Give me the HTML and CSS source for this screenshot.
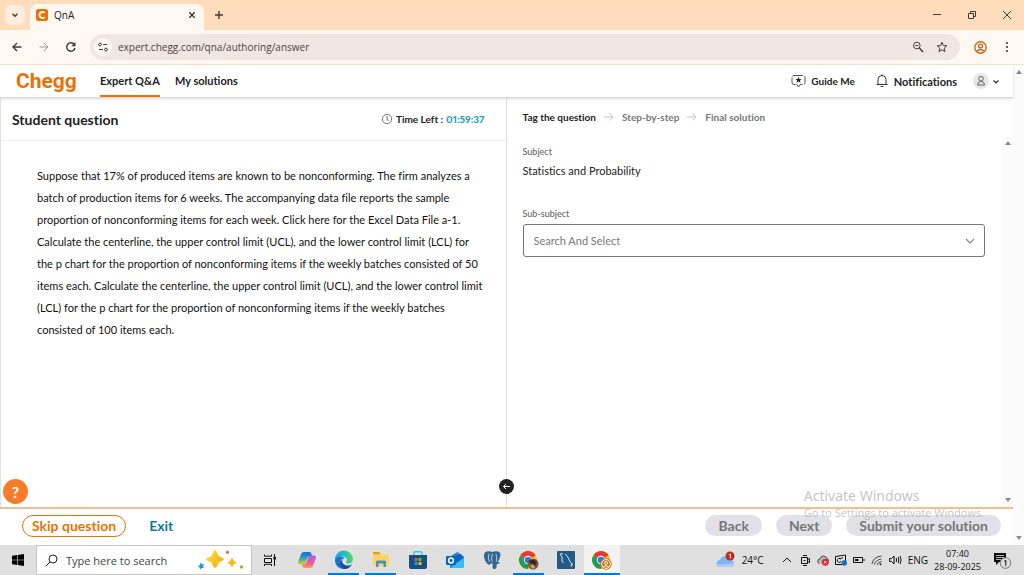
FILE: index.html
```html
<!DOCTYPE html>
<html lang="en">
<head>
<meta charset="utf-8">
<meta name="viewport" content="width=device-width, initial-scale=1">
<title>QnA</title>
<link rel="stylesheet" href="styles.css">
</head>
<body>
<div class="tabstrip">
  <button class="tab-search" aria-label="Search tabs"><svg width="10" height="10" viewBox="0 0 10 10"><path class="ln bold" d="M2.5 3.7 5 6.2l2.500-2.500"/></svg></button>
  <div class="tab">
    <svg width="12" height="12" viewBox="0 0 12 12"><rect width="12" height="12" rx="2.500" fill="#eb7100"/><path d="M8.600 3.900A3 3 0 1 0 8.600 8.100" fill="none" stroke="#fff" stroke-width="1.800"/></svg>
    <span class="tab-title">QnA</span>
    <button class="bare" aria-label="Close tab"><svg width="10" height="10" viewBox="0 0 10 10"><path class="ln bold" d="M2.300 2.300l5.400 5.400M7.700 2.300 2.300 7.700"/></svg></button>
  </div>
  <button class="bare new-tab" aria-label="New tab"><svg width="10" height="10" viewBox="0 0 10 10"><path class="ln bold" d="M5 1v8M1 5h8"/></svg></button>
  <div class="window-controls">
    <button class="bare" aria-label="Minimize"><svg width="10" height="10" viewBox="0 0 10 10"><path class="ln" d="M1 4.500h8"/></svg></button>
    <button class="bare" aria-label="Restore"><svg width="10" height="10" viewBox="0 0 10 10"><path class="ln" d="M1.500 3.500h5v5h-5zM3.500 3.500v-2h5v5h-2"/></svg></button>
    <button class="bare" aria-label="Close"><svg width="10" height="10" viewBox="0 0 10 10"><path class="ln" d="M1 1l8 8M9 1 1 9"/></svg></button>
  </div>
</div>
<div class="toolbar">
  <button class="bare" aria-label="Back"><svg width="12" height="12" viewBox="0 0 12 12"><path class="ln bold" d="M10.500 6H2M6 2 2 6l4 4"/></svg></button>
  <button class="bare dim" aria-label="Forward"><svg width="12" height="12" viewBox="0 0 12 12"><path class="ln" d="M1.500 6H10M6 2l4 4-4 4"/></svg></button>
  <button class="bare" aria-label="Reload"><svg width="12" height="12" viewBox="0 0 12 12"><path class="ln bold" d="M10 7A4.200 4.200 0 1 1 9.300 3.500"/><path d="M10.500 1v4.200H6.300z" fill="#46392f"/></svg></button>
  <div class="omnibox">
    <button class="site-info" aria-label="Site information"><svg width="12" height="12" viewBox="0 0 12 12"><circle class="ln" cx="3" cy="3.500" r="1.400"/><path class="ln" d="M6 3.500h4M2 8.500h4"/><circle class="ln" cx="9" cy="8.500" r="1.400"/></svg></button>
    <input class="url" aria-label="Address" value="expert.chegg.com/qna/authoring/answer">
    <button class="bare" aria-label="Zoom"><svg width="12" height="12" viewBox="0 0 12 12"><circle class="ln" cx="4.800" cy="4.500" r="3.300"/><path class="ln bold" d="M7.300 7l3.700 4"/><path class="ln" d="M3.300 4.500h3"/></svg></button>
    <button class="bare" aria-label="Bookmark"><svg width="12" height="12" viewBox="0 0 12 12"><path class="ln" d="M6 1.300 7.300 4.500l3.500.3-2.600 2.300.8 3.500-3-1.900-3 1.900.8-3.500L1.200 4.800l3.500-.3z"/></svg></button>
  </div>
  <button class="bare profile" aria-label="Profile"><svg width="13" height="13" viewBox="0 0 13 13"><g fill="none" stroke="#c9691b" stroke-width="1.400"><circle cx="6.500" cy="6.500" r="5.700"/><circle cx="6.500" cy="5" r="1.900"/><path d="M2.600 10.300Q6.500 6.800 10.400 10.300"/></g></svg></button>
  <button class="bare" aria-label="Menu"><svg width="12" height="12" viewBox="0 0 12 12" fill="#46392f"><circle cx="6" cy="2" r="1.100"/><circle cx="6" cy="6" r="1.100"/><circle cx="6" cy="10" r="1.100"/></svg></button>
</div>

<div class="viewport">
  <div class="page">
    <header class="site-header">
      <a class="logo" href="#">Chegg</a>
      <nav class="site-nav">
        <a class="current" href="#">Expert Q&amp;A</a>
        <a href="#">My solutions</a>
      </nav>
      <button class="bare guide"><svg width="15" height="15" viewBox="0 0 15 15"><path d="M3 1.500h9q2 0 2 2v5q0 2-2 2H9L7.500 13 6 10.500H3q-2 0-2-2v-5q0-2 2-2z" fill="none" stroke="#555263" stroke-dasharray="9 1"/><path d="M7.500 3l.9 2 2.200.2-1.700 1.400.6 2.200-2-1.200-2 1.200.6-2.200-1.700-1.400 2.200-.2z" fill="#222135"/></svg>Guide Me</button>
      <button class="bare notify"><svg width="12" height="14" viewBox="0 0 12 14"><path d="M.5 10.500h11M2 10.300V5.500a4 4 0 0 1 8 0v4.800M6 1.500V.300M4.600 12.500h2.800" fill="none" stroke="#333"/></svg>Notifications</button>
      <button class="bare account" aria-label="Account"><span class="avatar"><svg width="10" height="12" viewBox="0 0 10 12"><circle cx="5" cy="3.700" r="2.300" fill="none" stroke="#666"/><path d="M1.500 10q0-3.500 3.500-3.500T8.500 10z" fill="none" stroke="#666"/></svg></span><svg width="8" height="8" viewBox="0 0 8 8"><path class="ln bold" d="M1.500 3.500 4 5.800 6.500 3.500"/></svg></button>
    </header>
    <main class="columns">
      <section class="question">
        <div class="question-head">
          <h1>Student question</h1>
          <p class="timer"><svg width="12" height="12" viewBox="0 0 12 12"><circle cx="6" cy="6" r="4.700" fill="none" stroke="#777"/><path d="M6 3V6.500l1.800 1" fill="none" stroke="#666"/></svg>Time Left : <b>01:59:37</b></p>
        </div>
        <p class="question-text">Suppose that 17% of produced items are known to be nonconforming. The firm analyzes a<br>batch of production items for 6 weeks. The accompanying data file reports the sample<br>proportion of nonconforming items for each week. Click here for the Excel Data File a-1.<br>Calculate the centerline, the upper control limit (UCL), and the lower control limit (LCL) for<br>the p chart for the proportion of nonconforming items if the weekly batches consisted of 50<br>items each. Calculate the centerline, the upper control limit (UCL), and the lower control limit<br>(LCL) for the p chart for the proportion of nonconforming items if the weekly batches<br>consisted of 100 items each.</p>
        <button class="help" aria-label="Help">?</button>
        <button class="collapse" aria-label="Collapse panel"><svg width="9" height="9" viewBox="0 0 9 9"><path d="M8 4.500H1.500M4 2 1.500 4.500 4 7" fill="none" stroke="#fff"/></svg></button>
      </section>
      <section class="answer">
        <ol class="steps">
          <li class="active">Tag the question</li>
          <li><svg width="10" height="10" viewBox="0 0 10 10"><path d="M0 5h9M5.500 1.500 9 5 5.500 8.500" fill="none" stroke="#c4c4cc"/></svg>Step-by-step</li>
          <li><svg width="10" height="10" viewBox="0 0 10 10"><path d="M0 5h9M5.500 1.500 9 5 5.500 8.500" fill="none" stroke="#c4c4cc"/></svg>Final solution</li>
        </ol>
        <div class="answer-body">
          <div class="fields">
            <h2 class="label">Subject</h2>
            <p class="subject">Statistics and Probability</p>
            <label class="label" for="sub">Sub-subject</label>
            <div class="select-box">
              <select id="sub"><option>Search And Select</option></select>
              <svg width="10" height="10" viewBox="0 0 10 10"><path d="M1 3l4 4 4-4" fill="none" stroke="#85838f" stroke-width="1.100"/></svg>
            </div>
          </div>
          <div class="scrollbar"><i class="up"></i><i class="down"></i></div>
        </div>
      </section>
    </main>
    <footer class="actions">
      <button class="skip">Skip question</button>
      <a class="exit" href="#">Exit</a>
      <div class="action-group">
        <button class="pill">Back</button>
        <button class="pill">Next</button>
        <button class="pill">Submit your solution</button>
      </div>
    </footer>
    <div class="watermark"><strong>Activate Windows</strong><span>Go to Settings to activate Windows.</span></div>
  </div>
  <div class="scrollbar"><i class="up"></i><i class="down"></i></div>
</div>

<div class="taskbar">
  <button class="task start" aria-label="Start"><svg width="12" height="12" viewBox="0 0 12 12" fill="#000"><path d="M0 1.700 5.200 1v4.700H0zM5.800.9 12 0v5.700H5.800zM0 6.300h5.200V11L0 10.300zM5.800 6.300H12V12l-6.200-.9z"/></svg></button>
  <div class="search">
    <svg width="13" height="13" viewBox="0 0 13 13"><circle cx="8" cy="5" r="4" fill="none" stroke="#222"/><path d="M5 8 .8 12.200" stroke="#222"/></svg>
    <input aria-label="Search" placeholder="Type here to search">
    <svg width="48" height="20" viewBox="0 0 48 20"><defs><linearGradient id="gold" x1="0" y1="0" x2="1" y2="1"><stop offset="0" stop-color="#ffe14a"/><stop offset="1" stop-color="#f2a900"/></linearGradient></defs><path d="M18 0q1.500 0 2.300 3.300Q21 6.500 24 7.200q3 .8 3 2t-3 2q-3 .8-3.700 4Q19.500 18 18 18t-2.300-2.800q-.7-3.200-3.700-4-3-.8-3-2t3-2q3-.7 3.700-3.900Q16.500 0 18 0z" fill="url(#gold)"/><path d="M35 8q.8 0 1.400 2.300.3.900 1.600 1.300 1.500.5 1.500 1T38 13.700q-1.300.4-1.600 1.400-.6 2-1.400 2t-1.400-2q-.3-1-1.600-1.400-1.500-.5-1.500-1.100t1.500-1q1.300-.4 1.600-1.300Q34.200 8 35 8z" fill="#f8b918"/><circle cx="30.500" cy="2.300" r="1.500" fill="#f05b25"/><rect x="43" y="15.500" width="3" height="3" rx=".8" fill="#80bd27"/><path d="M3.500 12.500l1.300 1.800 2.100-.2-.8 2 .7 2-2.100-.2-1.700 1.500-.5-2.100-1.800-.8 1.800-1.100z" fill="#119ce8"/></svg>
  </div>
  <button class="task view" aria-label="Task view"><svg width="12" height="12" viewBox="0 0 12 12"><path d="M.5.500v1.700h7V.500M.5 4.500h7v4h-7zM.5 12v-1.700h7V12M10.500 0v12" fill="none" stroke="#111"/><rect x="9.500" y="3" width="2.500" height="2.500" fill="#111"/></svg></button>
  <button class="task" aria-label="Copilot"><svg width="20" height="20" viewBox="0 0 20 20"><defs><linearGradient id="ca" x1="0" y1="0" x2="0" y2="1"><stop offset="0" stop-color="#1769d2"/><stop offset=".5" stop-color="#28a8b8"/><stop offset="1" stop-color="#eed21d"/></linearGradient><linearGradient id="cb" x1="0" y1="0" x2="0" y2="1"><stop offset="0" stop-color="#a75cf0"/><stop offset=".6" stop-color="#ef5c93"/><stop offset="1" stop-color="#ff9b52"/></linearGradient></defs><path d="M4.300 3.500Q5 2 7 2h5.500q1.500 0 2 2l.7 2h-2q-2 0-2.500 1.500L9 12q-.7 2.500-2.500 2.500H3q-2.500 0-1.800-3z" fill="url(#ca)"/><path d="M15.700 16.500Q15 18 13 18H7.500q-1.500 0-2-2l-.5-1.500h2q2 0 2.500-2L11 8q.7-2.500 2.500-2.500H17q2.500 0 1.800 3z" fill="url(#cb)"/></svg></button>
  <button class="task open" aria-label="Edge"><svg width="20" height="20" viewBox="0 0 20 20"><defs><linearGradient id="ea" x1="0" y1=".4" x2="1" y2=".3"><stop offset="0" stop-color="#189cdc"/><stop offset=".55" stop-color="#27bfc2"/><stop offset="1" stop-color="#69d94b"/></linearGradient></defs><path d="M1 10a9 9 0 0 1 18-1c0 3-2 4.500-4.500 4.500-2 0-3-1-2-2.300C14 8.500 11 6.500 8 6.500 4.500 6.500 2 8 1 10z" fill="url(#ea)"/><path d="M1 10c.8-2.500 3.500-3.800 6-3.500 2 .2 3 1 3.500 2C8 8.500 6.500 10 6.500 12c0 3 3 5.500 6 5.500l-1.800 1.400C5.500 19.500.8 15.500 1 10z" fill="#1377ca"/><path d="M8.500 9.200c-1.500 4 2 6.500 5.500 6.300 1.500 0 3-.6 4-1.300-1.500 3-4.500 5-7.500 4.800C6 17.500 4 12 8.500 9.200z" fill="#124e9b"/></svg></button>
  <button class="task open" aria-label="File Explorer"><svg width="20" height="20" viewBox="0 0 20 20"><path d="M2 3q0-1 1-1h5l2 2.500H2z" fill="#e39b10"/><path d="M2 4.500h15q1 0 1 1V15q0 1-1 1H3q-1 0-1-1z" fill="#ffd45c"/><path d="M5 17v-5q0-1.500 1.500-1.500h7q1.500 0 1.500 1.500v5h-2.500v-3.500h-5V17z" fill="#3f91d2"/></svg></button>
  <button class="task" aria-label="Microsoft Store"><svg width="20" height="20" viewBox="0 0 20 20"><path d="M6 6V3q0-1.200 1.200-1.200h5.600Q14 1.800 14 3v3" fill="none" stroke="#43c3ee" stroke-width="1.500"/><path d="M1 5h18v12q0 2-2 2H3q-2 0-2-2z" fill="#164f86"/><path d="M6.500 8h3v3h-3z" fill="#f35325"/><path d="M10.500 8h3v3h-3z" fill="#81bc06"/><path d="M6.500 12h3v3h-3z" fill="#05a6f0"/><path d="M10.500 12h3v3h-3z" fill="#ffba08"/></svg></button>
  <button class="task" aria-label="Outlook"><svg width="20" height="20" viewBox="0 0 20 20"><path d="M5 6.500 12.500 2 19 7v9q0 2-2 2H5z" fill="#1684db"/><path d="M6 7 16 4l2.500 3L11 13z" fill="#1063b5"/><path d="M5 18 19 8v8q0 2-2 2z" fill="#35bdf2"/><rect x="1" y="6" width="10" height="9" rx="1" fill="#0866bd"/><ellipse cx="6" cy="10.500" rx="2.300" ry="2.500" fill="none" stroke="#fff" stroke-width="1.400"/></svg></button>
  <button class="task" aria-label="PostgreSQL"><svg width="20" height="20" viewBox="0 0 20 20"><path d="M5 1.500Q8 .8 10 2q4-1.500 7-.2 2 1.200 1.200 4.500Q17.500 10 15.500 12l2.500.5q-1 1.500-3.200 1.500l-.5 4q-.3 1-2 1-1.600 0-1.800-1.500V13q-1 1-2 .5l-.8 1.500Q4 14 2.500 9 .5 2.500 5 1.500z" fill="#336791"/><path d="M7 3.500Q5.500 8 7.500 12M10.500 4q-2 4-.3 7.500M14 4q1.500 3 .3 7.500" fill="none" stroke="#d8e2ec" stroke-width=".8"/></svg></button>
  <button class="task open" aria-label="Chrome, personal"><svg width="22" height="20" viewBox="0 0 22 20"><path d="M10 10 2.200 5.500A9 9 0 0 1 17.800 5.500z" fill="#e33b2e"/><path d="M10 10 17.800 5.500A9 9 0 0 1 10 19z" fill="#fbc116"/><path d="M10 10v9A9 9 0 0 1 2.200 5.500z" fill="#269d4b"/><circle cx="10" cy="10" r="4.200" fill="#fff"/><circle cx="10" cy="10" r="3.300" fill="#3478e5"/><circle cx="15" cy="14" r="5.500" fill="#79593f"/><path d="M11 11q4-3 8 1l-2 4-4-2z" fill="#37281f"/><path d="M12 16l3-2 2 3-2 2z" fill="#c7a17b"/></svg></button>
  <button class="task" aria-label="MySQL Workbench"><svg width="20" height="20" viewBox="0 0 20 20"><rect x="1" y="1" width="18" height="18" rx="1" fill="#235a84"/><path d="M4 4l2 3v4l1.500 2M4 4q1.500-.8 3 0M9 4q2.500 1 4 5.500 1.200 3.500 4 5l-2 .3.5 2" fill="none" stroke="#d7e7f2" stroke-width="1"/></svg></button>
  <button class="task open active" aria-label="Chrome, work"><svg width="22" height="20" viewBox="0 0 22 20"><path d="M10 10 2.200 5.500A9 9 0 0 1 17.800 5.500z" fill="#e33b2e"/><path d="M10 10 17.800 5.500A9 9 0 0 1 10 19z" fill="#fbc116"/><path d="M10 10v9A9 9 0 0 1 2.200 5.500z" fill="#269d4b"/><circle cx="10" cy="10" r="4.200" fill="#fff"/><circle cx="10" cy="10" r="3.300" fill="#3478e5"/><circle cx="15" cy="14" r="5.800" fill="#ca731f"/><g fill="none" stroke="#fff3e4"><circle cx="15" cy="14" r="4.400"/><circle cx="15" cy="13" r="1.500"/><path d="M12 17q3-2.800 6 0"/></g></svg></button>
  <div class="tray">
    <button class="bare weather"><svg width="20" height="18" viewBox="0 0 20 18"><path d="M4 16a3.500 3.500 0 0 1 0-7q1-4 5-4 3.500 0 4.500 3.500Q18 9 18 12.500 18 16 14.500 16z" fill="#82b5f5"/><path d="M4 16q-3 0-3.300-3Q8 14 17.800 12q0 4-3.300 4z" fill="#a9cefb"/><circle cx="14" cy="5" r="4.500" fill="#c42b1c"/><path d="M13 3.800 14.300 3v4.500" fill="none" stroke="#fff"/></svg>24°C</button>
    <button class="bare" aria-label="Show hidden icons"><svg width="12" height="12" viewBox="0 0 12 12"><path class="tray-line" d="M2 8l4-4 4 4"/></svg></button>
    <button class="bare" aria-label="Meet now"><svg width="12" height="12" viewBox="0 0 12 12"><path class="tray-line" d="M4 1.500h4M4 11.500h4M2.500 3.500h6v6h-6zM8.500 5.500 10.500 4.500v4l-2-1M4.500 6.500h2"/></svg></button>
    <button class="bare" aria-label="OneDrive"><svg width="12" height="12" viewBox="0 0 12 12"><path d="M2.500 9.500Q.5 9 .8 7 1 5 3 5q.8-3 3.500-3 2.500 0 3.300 2.500 1.700.3 1.700 2.500" fill="#bbb" stroke="#444"/><circle cx="8.300" cy="8.300" r="3.500" fill="#e32636"/><path d="M7.100 7.100 9.500 9.500M9.500 7.100 7.100 9.500" stroke="#fff"/></svg></button>
    <button class="bare" aria-label="Windows Update"><svg width="12" height="12" viewBox="0 0 12 12"><path class="tray-line" d="M.5 2.500l10-1.500v9.500H.5zM5 4.500a2 2 0 1 0 1 3M5 5l3-1.500"/><circle cx="9.200" cy="9" r="2.800" fill="#176fc1"/></svg></button>
    <button class="bare" aria-label="Battery"><svg width="12" height="12" viewBox="0 0 12 12"><path class="tray-line" d="M.5 3.500h9v5h-9zM11 5v2"/><path d="M2 5h3.500v2H2z" fill="#111"/></svg></button>
    <button class="bare" aria-label="Wi-Fi"><svg width="12" height="12" viewBox="0 0 12 12"><path d="M1 10Q2 3 10.500 2M3.500 10.500Q4 6 10.500 5M6 11q.5-3 4.500-3.500" fill="none" stroke="#444"/><circle cx="9.500" cy="10.300" r="1" fill="#222"/></svg></button>
    <button class="bare" aria-label="Volume"><svg width="13" height="12" viewBox="0 0 13 12"><path class="tray-line" d="M.5 4.500h2L5 2v8L2.500 7.500h-2zM7 4q1.300 2 0 4M9 3q2 3 0 6M11 2q2.500 4 0 8"/></svg></button>
    <button class="bare lang">ENG</button>
    <button class="bare clock"><span>07:40</span><span>28-09-2025</span></button>
    <button class="bare" aria-label="1 new notification"><svg width="19" height="18" viewBox="0 0 19 18"><path d="M1 2h12v9H6l-3 3v-3H1z" fill="#111"/><path d="M3 4.500h8M3 6.500h8M3 8.500h5" stroke="#ddd" stroke-width=".8"/><circle cx="12.500" cy="12" r="5.300" fill="#ddd" stroke="#777"/><path d="M11.300 10.300 12.800 9.300v5.500" fill="none" stroke="#111"/></svg></button>
  </div>
</div>
</body>
</html>
```
FILE: styles.css
```css
* { box-sizing: border-box; }
body {
  margin: 0;
  height: 100vh;
  display: grid;
  grid-template-rows: 30px 35px minmax(0, 1fr) 30px;
  overflow: hidden;
  font-family: "Open Sans", "Noto Sans", sans-serif;
  font-size: 10px;
  font-variant-ligatures: none;
  color: #222;
  background: #fff;
}
h1, h2, p, ol { margin: 0; padding: 0; }
a { color: inherit; text-decoration: none; }
button, input, select { font: inherit; font-variant-ligatures: none; color: inherit; }
svg { display: block; flex: none; }
.bare { display: flex; align-items: center; padding: 0; border: 0; background: none; }
.ln { fill: none; stroke: #46392f; stroke-width: 1; }
.ln.bold { stroke-width: 1.4; }

/* Browser window */
.tabstrip { display: flex; align-items: center; background: #ffdcbc; padding-left: 5px; }
.tab-search { display: grid; place-items: center; width: 20px; height: 20px; padding: 0; border: 0; border-radius: 7px; background: #ffeddd; }
.tab { align-self: flex-end; display: flex; align-items: center; width: 174px; height: 26px; margin-left: 5px; padding: 0 7px 4px 6px; border-radius: 8px 8px 0 0; background: #fff7f2; }
.tab-title { flex: 1; margin-left: 6px; }
.new-tab { margin-left: 10px; }
.window-controls { display: flex; gap: 25px; margin-left: auto; padding-right: 12px; }
.toolbar { display: flex; align-items: center; gap: 15px; padding: 0 11px; background: #fff7f2; border-bottom: 1px solid #fbe2d2; }
.dim { opacity: .5; }
.omnibox { flex: 1; display: flex; align-items: center; gap: 12px; height: 26px; margin-left: -2px; padding: 0 12px 0 4px; border-radius: 13px; background: #f0e7e3; }
.site-info { display: grid; place-items: center; width: 18px; height: 18px; padding: 0; border: 0; border-radius: 50%; background: #fff7f2; }
.url { flex: 1; min-width: 0; margin-left: -6px; padding: 0; border: 0; background: none; color: #4c4440; }
.profile { margin: 0 -1px; }

.viewport { display: flex; min-height: 0; }
.page { position: relative; flex: 1; min-width: 0; display: flex; flex-direction: column; font-family: Lato, "Noto Sans", sans-serif; font-size: 11px; }
.scrollbar { flex: none; width: 11px; display: flex; flex-direction: column; justify-content: space-between; align-items: center; padding: 5px 0; background: #fbfbfb; }
.up, .down { border: 3px solid transparent; }
.up { border-top: 0; border-bottom: 4px solid #8a8a8a; }
.down { border-bottom: 0; border-top: 4px solid #8a8a8a; }

/* Site header */
.site-header { z-index: 1; display: flex; align-items: center; height: 33px; padding: 0 13px 0 16px; border-bottom: 1px solid #d8d8d8; box-shadow: 0 1px 3px #0002; font-weight: 700; }
.logo { width: 84px; font: 700 21px/28px Roboto, sans-serif; color: #eb7100; }
.site-nav { align-self: stretch; display: flex; gap: 15px; margin-right: auto; line-height: 32px; }
.current { border-bottom: 2px solid #eb7100; }
.guide { gap: 5px; font-size: 10px; }
.notify { gap: 6px; margin-left: 21px; }
.account { gap: 3px; margin-left: 16px; }
.avatar { display: grid; place-items: center; width: 16px; height: 16px; border-radius: 50%; background: #e7e7e7; }

/* Question and answer columns */
.columns { flex: 1; min-height: 0; display: grid; grid-template-columns: 1fr 1fr; }
.question { position: relative; border: 1px solid #e2e2e2; border-width: 0 1px; }
.question-head { display: flex; align-items: center; justify-content: space-between; height: 43px; padding: 0 21px 0 11px; border-bottom: 1px solid #f0f0f0; }
h1 { font-size: 14px; font-weight: 700; }
.timer { display: flex; align-items: center; gap: 3px; font-size: 10px; font-weight: 700; }
.timer b { color: #2e9bca; font-variant-numeric: proportional-nums; }
.question-text { padding: 24px 0 0 36px; line-height: 22px; white-space: nowrap; color: #111; }
.help { position: absolute; left: 2px; bottom: 3px; width: 25px; height: 25px; padding: 0; border: 0; border-radius: 50%; background: #f97c2d; color: #fff; font-size: 16px; font-weight: 700; line-height: 25px; }
.collapse { position: absolute; right: -8px; bottom: 13px; z-index: 1; display: grid; place-items: center; width: 15px; height: 15px; padding: 0; border: 0; border-radius: 50%; background: #222; }
.answer { display: flex; flex-direction: column; min-width: 0; }
.steps { display: flex; gap: 8px; height: 38px; padding-left: 16px; list-style: none; font-size: 10px; font-weight: 700; line-height: 38px; color: #777; }
.steps li { display: flex; align-items: center; gap: 8px; }
.steps .active { color: #222; }
.answer-body { flex: 1; min-height: 0; display: flex; }
.fields { flex: 1; padding: 10px 17px 0 16px; }
.label { display: block; font-size: 9px; font-weight: 500; line-height: 12px; color: #666; }
.subject { margin: 5px 0 29px; line-height: 16px; }
.select-box { display: grid; align-items: center; margin-top: 4px; }
.select-box > * { grid-area: 1 / 1; }
.select-box svg { justify-self: end; margin-right: 10px; pointer-events: none; }
select { width: 100%; height: 33px; padding: 0 10px; border: 1px solid #777480; border-radius: 3px; background: #fff; color: #777; appearance: none; }

/* Bottom action bar */
.actions { display: flex; align-items: center; height: 38px; padding: 0 12px 3px 22px; border-top: 2px solid #f8be91; font-size: 14px; font-weight: 700; }
.skip { height: 22px; padding: 0 9px; border: 1px solid #eb7100; border-radius: 11px; background: #fff; color: #eb7100; line-height: 20px; }
.exit { margin-left: 23px; color: #087ea0; }
.action-group { display: flex; gap: 14px; margin-left: auto; }
.pill { height: 21px; padding: 0 13px; border: 0; border-radius: 11px; background: #e2e1e7; color: #777; line-height: 21px; }
.watermark { position: absolute; right: 29px; bottom: 25px; display: grid; color: #aaaaaab0; font-family: "Open Sans", sans-serif; pointer-events: none; }
.watermark strong { font-family: "Noto Sans", sans-serif; font-size: 14px; font-weight: 400; line-height: 20px; }
.watermark span { line-height: 14px; }

/* Taskbar */
.taskbar { display: flex; background: #e0e0e0; }
.task { display: grid; place-items: center; width: 31px; margin: 0 3px; padding: 0; border: 0; background: none; }
.start { width: 36px; margin: 0; }
.view { margin-left: 2px; }
.open { border-bottom: 2px solid #0878d4; padding-top: 2px; }
.active.task { width: 36px; margin: 0; background: #f3f3f3; }
.search { display: flex; align-items: center; width: 216px; padding: 0 6px 0 8px; border: 1px solid #c4c4c4; background: #fff; }
.search input { flex: 1; min-width: 0; margin-left: 8px; padding: 0; border: 0; font-size: 11px; }
.search input::placeholder { color: #444; }
.tray { display: flex; align-items: center; gap: 6px; margin-left: auto; padding-right: 12px; color: #111; }
.tray-line { fill: none; stroke: #111; }
.weather { gap: 6px; margin-right: 11px; }
.clock { display: grid; justify-items: center; margin: 0 6px 0 0; font-size: 9px; line-height: 13px; }
```
